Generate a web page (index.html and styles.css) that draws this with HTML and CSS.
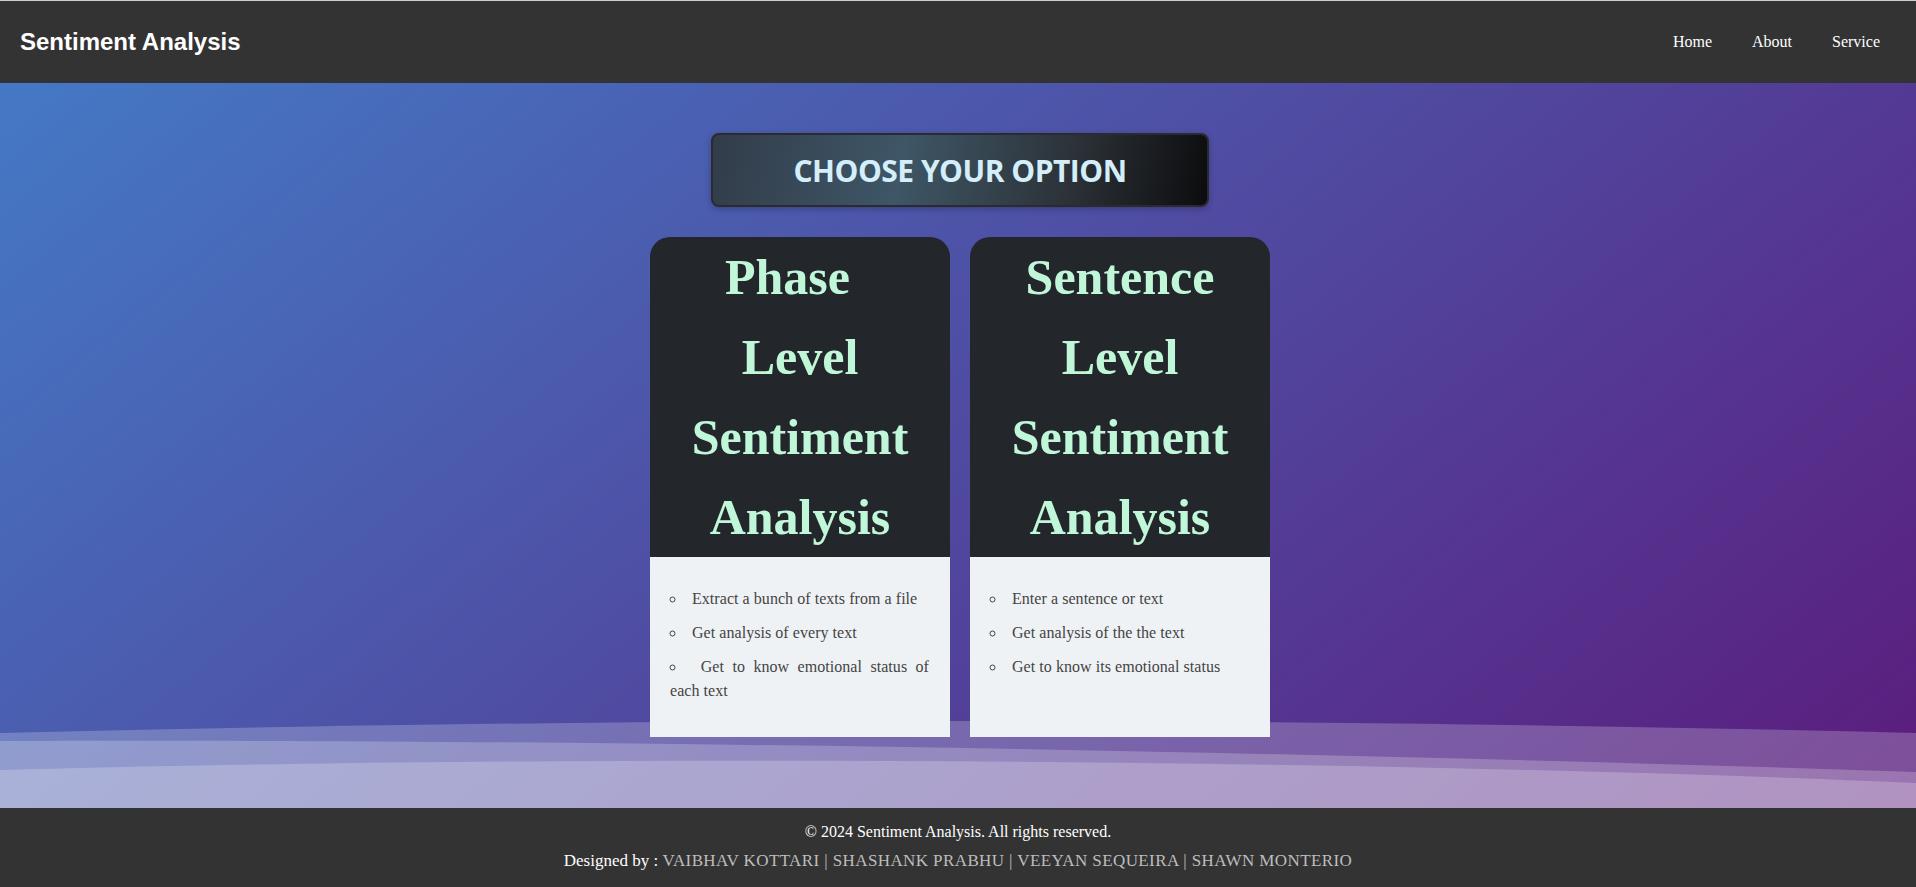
FILE: index.html
```html
<!DOCTYPE html>
<html lang="en">
<head>
<meta charset="utf-8">
<title>Sentiment Analysis</title>
<link rel="stylesheet" href="styles.css">
</head>
<body>
<header class="topbar">
  <div class="brand">Sentiment Analysis</div>
  <nav class="nav">
    <a href="#">Home</a>
    <a href="#">About</a>
    <a href="#">Service</a>
  </nav>
</header>
<main class="stage">
  <svg class="waves" viewBox="0 0 1916 110" preserveAspectRatio="none" aria-hidden="true">
    <path d="M0,35 Q958,11 1916,35 L1916,110 L0,110 Z" fill="rgba(255,255,255,0.22)"/>
    <path d="M0,43 C500,41 1200,50 1916,74 L1916,110 L0,110 Z" fill="rgba(255,255,255,0.22)"/>
    <path d="M0,72 C500,58 1300,58 1916,85 L1916,110 L0,110 Z" fill="rgba(255,255,255,0.22)"/>
  </svg>
  <div class="choose">CHOOSE YOUR OPTION</div>
  <div class="cards">
    <div class="card">
      <div class="card-head"><h2>Phase&nbsp;&nbsp; Level Sentiment Analysis</h2></div>
      <div class="card-body">
        <ul class="points">
          <li>Extract a bunch of texts from a file</li>
          <li>Get analysis of every text</li>
          <li>Get to know emotional status of each text</li>
        </ul>
      </div>
    </div>
    <div class="card">
      <div class="card-head"><h2>Sentence Level Sentiment Analysis</h2></div>
      <div class="card-body">
        <ul class="points">
          <li>Enter a sentence or text</li>
          <li>Get analysis of the the text</li>
          <li>Get to know its emotional status</li>
        </ul>
      </div>
    </div>
  </div>
</main>
<footer class="footer">
  <p>&copy; 2024 Sentiment Analysis. All rights reserved.</p>
  <p class="credits">Designed by : <span class="names">VAIBHAV KOTTARI | SHASHANK PRABHU | VEEYAN SEQUEIRA | SHAWN MONTERIO</span></p>
</footer>
</body>
</html>
```

FILE: styles.css
```css
html, body {
  margin: 0;
  padding: 0;
}

body {
  font-family: "Liberation Serif", "Times New Roman", serif;
  background: #333;
}

.topbar {
  height: 82px;
  border-top: 1px solid #cfcfcf;
  background: #333333;
  display: flex;
  align-items: center;
  justify-content: space-between;
  padding: 0 36px 0 20px;
}

.brand {
  font-family: "Liberation Sans", Arial, sans-serif;
  font-weight: bold;
  font-size: 24px;
  color: #ffffff;
}

.nav {
  display: flex;
  gap: 40px;
}

.nav a {
  font-family: "Liberation Serif", "Times New Roman", serif;
  font-size: 16px;
  color: #ffffff;
  text-decoration: none;
}

.stage {
  position: relative;
  box-sizing: border-box;
  min-height: calc(100vh - 162px);
  padding-top: 50px;
  padding-left: 4px;
  display: flex;
  flex-direction: column;
  align-items: center;
  background: linear-gradient(141deg, #4479c5 0%, #5b1c7d 100%);
  overflow: hidden;
}

.waves {
  position: absolute;
  left: 0;
  bottom: 0;
  width: 100%;
  height: 110px;
  display: block;
}

.choose {
  position: relative;
  z-index: 1;
  box-sizing: border-box;
  width: 498px;
  height: 74px;
  border: 2px solid #2b2b2f;
  border-radius: 8px;
  background: linear-gradient(100deg, #323c4a 0%, #3e5666 38%, #2c3238 72%, #0c0c0e 100%);
  box-shadow: 0 2px 6px rgba(0, 0, 0, 0.25);
  display: flex;
  align-items: center;
  justify-content: center;
  font-family: "Open Sans", "Noto Sans", sans-serif;
  font-weight: 700;
  font-size: 30px;
  letter-spacing: -0.5px;
  color: #d4eefa;
}

.cards {
  position: relative;
  z-index: 1;
  display: flex;
  gap: 20px;
  margin-top: 30px;
  align-items: stretch;
}

.card {
  width: 300px;
  display: flex;
  flex-direction: column;
}

.card-head {
  background: #23272c;
  border-radius: 20px 20px 0 0;
}

.card-head h2 {
  margin: 0;
  padding: 0 25px;
  font-family: "Liberation Serif", "Times New Roman", serif;
  font-weight: bold;
  font-size: 50px;
  line-height: 80px;
  color: #c1f7d9;
  text-align: center;
}

.card-body {
  flex: 1;
  background: #eff2f5;
  padding: 30px 21px 34px 20px;
}

.points {
  margin: 0;
  padding: 0;
  list-style: circle inside;
}

.points li {
  font-family: "Liberation Serif", "Times New Roman", serif;
  font-size: 16px;
  line-height: 24px;
  letter-spacing: 0.05px;
  color: #444444;
  text-align: justify;
  margin-bottom: 10px;
}

.points li:last-child {
  margin-bottom: 0;
}

.footer {
  background: #333333;
  padding: 14px 0 16px;
  text-align: center;
  font-family: "Liberation Serif", "Times New Roman", serif;
  font-size: 16px;
  line-height: 20px;
  color: #ffffff;
}

.footer p {
  margin: 0;
}

.footer .credits {
  margin-top: 9px;
  font-size: 17px;
}

.names {
  color: #bdbdbd;
  letter-spacing: 0.4px;
}
```
